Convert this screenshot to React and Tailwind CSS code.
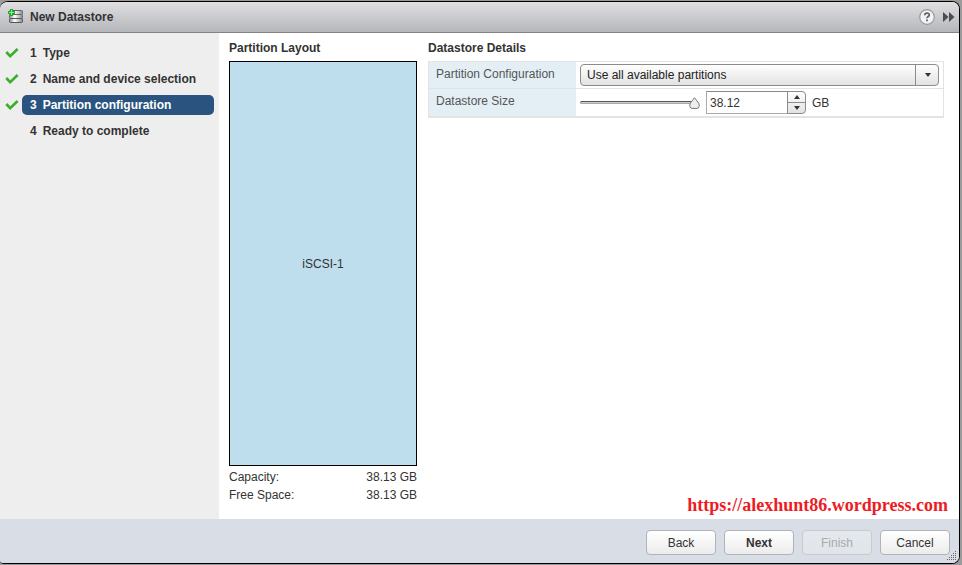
import React, { useState } from 'react';
import clsx from 'clsx';

const MAX_SIZE = 38.12;

const steps = [
  { id: 1, label: 'Type', done: true },
  { id: 2, label: 'Name and device selection', done: true },
  { id: 3, label: 'Partition configuration', done: true },
  { id: 4, label: 'Ready to complete', done: false },
];

const DatastoreIcon = () => (
  <svg className="h-4 w-4" viewBox="0 0 16 16" aria-hidden="true">
    <defs>
      <linearGradient id="disk" x1="0" x2="1">
        <stop offset="0" stopColor="#888" />
        <stop offset="0.4" stopColor="#fff" />
        <stop offset="1" stopColor="#888" />
      </linearGradient>
    </defs>
    <rect x="1.5" y="1.5" width="13" height="4" rx="1" fill="url(#disk)" stroke="#666" />
    <rect x="1.5" y="5.5" width="13" height="4" rx="1" fill="url(#disk)" stroke="#666" />
    <rect x="1.5" y="9.5" width="13" height="4" rx="1" fill="url(#disk)" stroke="#555" />
    <path d="M3.5 0v7M0 3.5h7" stroke="#22a834" strokeWidth="3" />
    <path d="M3.5 1v5M1 3.5h5" stroke="#7dfa7d" strokeWidth="1" />
  </svg>
);

const CheckIcon = () => (
  <svg className="h-3 w-3.5" viewBox="0 0 14 12" aria-hidden="true">
    <path d="M1.3 5L5.2 9.2L12.6 2" fill="none" stroke="#3dae2b" strokeWidth="2.6" />
  </svg>
);

const ArrowIcon = ({ up }) => (
  <svg className="h-1 w-1.5" viewBox="0 0 6 4" aria-hidden="true">
    <path d={up ? 'M0 4L3 0L6 4z' : 'M0 0L3 4L6 0z'} fill="#333" />
  </svg>
);

const Header = () => (
  <header className="flex h-[31px] items-center border-b border-[#838386] bg-linear-to-b from-[#e0e0e3] to-[#b5b6ba] pr-1 pl-2">
    <DatastoreIcon />
    <h1 className="ml-1.5 font-bold">New Datastore</h1>
    <button type="button" aria-label="Help" className="ml-auto">
      <svg className="h-4 w-4" viewBox="0 0 16 16">
        <circle cx="8" cy="8" r="7.3" fill="#f3f3f3" stroke="#98989a" strokeWidth="1.2" />
        <path d="M5.7 6.2C5.7 3.4 10.3 3.5 10.3 6C10.3 7.5 8 7.5 8 9.3" fill="none" stroke="#666" strokeWidth="1.8" />
        <path d="M7.1 10.5h1.8v1.8H7.1z" fill="#666" />
      </svg>
    </button>
    <button type="button" aria-label="Expand" className="ml-2">
      <svg className="h-2.5 w-3" viewBox="0 0 12 10">
        <path d="M0 0L5.5 5L0 10zM6 0L11.5 5L6 10z" fill="#4b4c50" />
      </svg>
    </button>
  </header>
);

const StepList = ({ current, onSelect }) => (
  <nav className="w-[219px] shrink-0 bg-[#eee] px-[5px] pt-2.5">
    <ol className="flex flex-col gap-1.5">
      {steps.map((step) => (
        <li key={step.id} className="flex h-5 items-center">
          <span className="w-[17px] shrink-0">{step.done && <CheckIcon />}</span>
          <button
            type="button"
            onClick={() => onSelect(step.id)}
            aria-current={step.id === current ? 'step' : undefined}
            className={clsx(
              'flex h-5 grow items-center gap-1.5 rounded-[5px] pl-2 font-bold',
              step.id === current && 'bg-[#2a547f] text-white'
            )}
          >
            <span>{step.id}</span>
            <span>{step.label}</span>
          </button>
        </li>
      ))}
    </ol>
  </nav>
);

const PartitionLayout = () => (
  <section className="flex w-[188px] shrink-0 flex-col pb-[15px]">
    <h2 className="font-bold">Partition Layout</h2>
    <div className="mt-[5px] flex grow items-center justify-center border border-black bg-[#bedded]">
      iSCSI-1
    </div>
    <dl className="mt-0.5 leading-[18px]">
      <div className="flex justify-between">
        <dt>Capacity:</dt>
        <dd>38.13 GB</dd>
      </div>
      <div className="flex justify-between">
        <dt>Free Space:</dt>
        <dd>38.13 GB</dd>
      </div>
    </dl>
  </section>
);

const SizeSlider = ({ value, onChange }) => (
  <div className="relative flex h-4 w-[120px] items-center pr-1">
    <div className="h-[3px] w-full rounded-sm border border-t-[#555] border-r-[#888] border-b-[#aaa] border-l-[#888] bg-[#ccc]" />
    <svg
      className="absolute top-0.5 h-3 w-[11px] -translate-x-full"
      style={{ left: `${9 + (value / MAX_SIZE) * 91}%` }}
      viewBox="0 0 11 12"
      aria-hidden="true"
    >
      <path d="M5.5 0.7L9.7 6.2C11 8.8 9.9 11.4 8 11.4H3C1.1 11.4 0 8.8 1.3 6.2z" fill="#eee" stroke="#777" />
    </svg>
    <input
      type="range"
      aria-label="Datastore Size slider"
      min="0"
      max={MAX_SIZE}
      step="0.01"
      value={value}
      onChange={(e) => onChange(Number(e.target.value))}
      className="absolute inset-0 w-full opacity-0"
    />
  </div>
);

const DatastoreDetails = () => {
  const [size, setSize] = useState(MAX_SIZE);

  const updateSize = (next) => {
    if (Number.isNaN(next)) return;
    setSize(Math.min(MAX_SIZE, Math.max(0, next)));
  };

  return (
    <section className="flex min-w-0 grow flex-col">
      <h2 className="font-bold">Datastore Details</h2>
      <div className="mt-[5px] mr-[15px] border border-b-2 border-[#e3e3e3]">
        {/* Partition configuration */}
        <div className="flex h-[27px] border-b border-[#e3e3e3]">
          <label htmlFor="config" className="w-[147px] shrink-0 bg-[#e4eff5] pt-1 pl-[7px] text-[#555]">
            Partition Configuration
          </label>
          <div className="relative mx-1 my-0.5 grow">
            <select
              id="config"
              className="h-[22px] w-full appearance-none rounded border border-[#8c8c8c] bg-linear-to-b from-white to-[#e2e2e2] pl-1.5 text-[#222] outline-none"
            >
              <option>Use all available partitions</option>
            </select>
            <span className="pointer-events-none absolute inset-y-px right-0 flex w-6 items-center justify-center border-l border-[#8c8c8c]">
              <ArrowIcon />
            </span>
          </div>
        </div>

        {/* Datastore size */}
        <div className="flex h-[27px]">
          <label htmlFor="size" className="w-[147px] shrink-0 bg-[#e4eff5] pt-1 pl-[7px] text-[#555]">
            Datastore Size
          </label>
          <div className="ml-1 flex items-center">
            <SizeSlider value={size} onChange={updateSize} />
            <input
              id="size"
              type="text"
              value={size}
              onChange={(e) => updateSize(parseFloat(e.target.value))}
              className="ml-1.5 h-[23px] w-[82px] border border-[#aaa] border-t-[#888] bg-white pl-[3px] outline-none"
            />
            <div className="-ml-px flex h-[23px] w-[19px] flex-col divide-y divide-[#8c8c8c] rounded-r border border-[#8c8c8c] bg-linear-to-b from-white to-[#e2e2e2]">
              <button
                type="button"
                aria-label="Increase size"
                onClick={() => updateSize(size + 1)}
                className="flex grow items-center justify-center"
              >
                <ArrowIcon up />
              </button>
              <button
                type="button"
                aria-label="Decrease size"
                onClick={() => updateSize(size - 1)}
                className="flex grow items-center justify-center"
              >
                <ArrowIcon />
              </button>
            </div>
            <span className="ml-1.5">GB</span>
          </div>
        </div>
      </div>
      <a
        href="https://alexhunt86.wordpress.com"
        className="mt-auto mr-[11px] self-end pb-0.5 font-['Liberation_Serif',serif] text-lg leading-6 font-bold text-[#ed1c24]"
      >
        https://alexhunt86.wordpress.com
      </a>
    </section>
  );
};

const FooterButton = ({ children, className, ...props }) => (
  <button
    type="button"
    className={clsx(
      'h-[25px] w-[70px] rounded border border-[#b0b3b8] bg-linear-to-b from-white to-[#ececec] pt-px disabled:border-[#c5cbd0] disabled:from-[#e5e9ed] disabled:to-[#e1e5e9] disabled:text-[#a5abb0]',
      className
    )}
    {...props}
  >
    {children}
  </button>
);

const Footer = ({ current, onSelect }) => (
  <footer className="relative flex h-11 shrink-0 items-center justify-end gap-2 bg-[#d9dde5] pt-0.5 pr-[9px]">
    <FooterButton onClick={() => onSelect(Math.max(1, current - 1))}>Back</FooterButton>
    <FooterButton className="font-bold" onClick={() => onSelect(Math.min(4, current + 1))}>
      Next
    </FooterButton>
    <FooterButton disabled={current !== 4}>Finish</FooterButton>
    <FooterButton>Cancel</FooterButton>
    {/* Resize grip */}
    <svg className="absolute right-0.5 bottom-0.5 h-[11px] w-[11px]" viewBox="0 0 11 11" aria-hidden="true">
      {[0, 1, 2, 3, 4].map((row) =>
        Array.from({ length: row + 1 }, (_, i) => (
          <rect key={`${row}-${i}`} x={9 - i * 2} y={1 + row * 2} width="1" height="1" fill="#666" />
        ))
      )}
    </svg>
  </footer>
);

const App = () => {
  const [current, setCurrent] = useState(3);

  return (
    <div className="flex h-screen bg-[#9b9b9b] pt-px pr-0.5 pb-px font-['Liberation_Sans',Arial,sans-serif] text-xs text-[#333]">
      <div className="flex grow flex-col overflow-hidden rounded-lg rounded-bl-sm border-y border-r border-black bg-white">
        <Header />
        <main className="flex min-h-0 grow">
          <StepList current={current} onSelect={setCurrent} />
          <div className="flex grow gap-[11px] pt-[7px] pl-2.5">
            <PartitionLayout />
            <DatastoreDetails />
          </div>
        </main>
        <Footer current={current} onSelect={setCurrent} />
      </div>
    </div>
  );
};

export default App;
